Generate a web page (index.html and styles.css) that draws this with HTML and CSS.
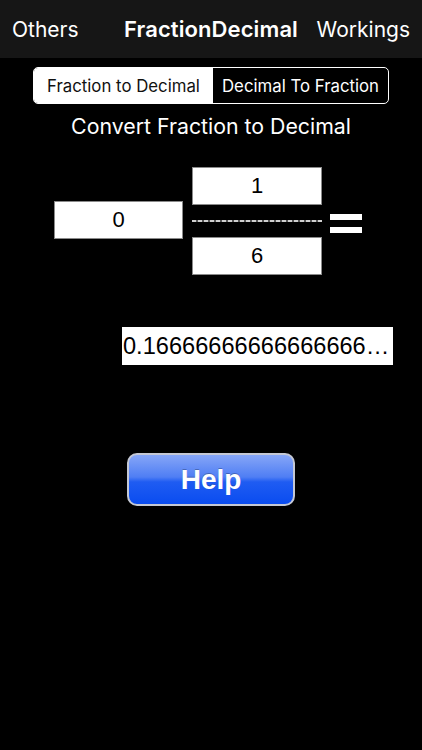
FILE: index.html
```html
<!DOCTYPE html>
<html>
<head>
<meta charset="utf-8">
<link rel="stylesheet" href="styles.css">
</head>
<body>
<div class="nav">
  <span class="nav-left">Others</span>
  <span class="nav-title">FractionDecimal</span>
  <span class="nav-right">Workings</span>
</div>
<div class="segment">
  <div class="seg seg-on">Fraction to Decimal</div>
  <div class="seg">Decimal To Fraction</div>
</div>
<div class="heading">Convert Fraction to Decimal</div>
<div class="fraction-row">
  <div class="box whole">0</div>
  <div class="frac">
    <div class="box">1</div>
    <div class="bar"></div>
    <div class="box">6</div>
  </div>
  <div class="equals"><div class="eq-line"></div><div class="eq-line"></div></div>
</div>
<div class="result-row">
  <div class="result">0.16666666666666666…</div>
</div>
<div class="help-row">
  <div class="help">Help</div>
</div>
</body>
</html>
```
FILE: styles.css
```css
html, body {
  margin: 0;
  padding: 0;
  background: #000;
  color: #fff;
  font-family: Inter, "Liberation Sans", sans-serif;
}
body {
  width: 422px;
  height: 750px;
  overflow: hidden;
}
.nav {
  height: 58px;
  background: #161616;
  display: grid;
  grid-template-columns: 1fr auto 1fr;
  align-items: center;
  padding: 0 12px;
  font-size: 21px;
}
.nav-left { justify-self: start; }
.nav-title { font-weight: 600; font-size: 22px; letter-spacing: 0.1px; }
.nav-right { justify-self: end; }
.segment {
  display: flex;
  width: 356px;
  height: 37px;
  margin: 9px 0 0 33px;
  border: 1px solid #fff;
  border-radius: 5px;
  box-sizing: border-box;
  overflow: hidden;
  font-size: 16.8px;
}
.seg {
  display: flex;
  align-items: center;
  justify-content: center;
  color: #fff;
  flex: 1;
}
.seg-on {
  background: #fff;
  color: #111;
  flex: 0 0 179px;
}
.heading {
  text-align: center;
  font-size: 21.3px;
  height: 32px;
  line-height: 32px;
  margin-top: 6px;
}
.fraction-row {
  display: flex;
  align-items: center;
  margin-top: 25px;
  padding-left: 54px;
}
.box {
  background: #fff;
  color: #000;
  font-family: "Liberation Sans", Arial, sans-serif;
  font-size: 22px;
  height: 38px;
  display: flex;
  align-items: center;
  justify-content: center;
  border: 1px solid #8a8a8a;
  box-sizing: border-box;
}
.whole {
  width: 129px;
  margin-top: -2px;
}
.frac {
  display: flex;
  flex-direction: column;
  width: 130px;
  margin-left: 9px;
}
.bar {
  height: 2px;
  margin: 15px 0 15px;
  background: repeating-linear-gradient(90deg, #d0d0d0 0 4px, #555 4px 6px);
}
.equals {
  display: flex;
  flex-direction: column;
  gap: 7px;
  margin-left: 8px;
  margin-top: 4px;
}
.eq-line {
  width: 32px;
  height: 6px;
  background: #fff;
}
.result-row {
  padding-left: 122px;
  margin-top: 52px;
}
.result {
  width: 271px;
  height: 38px;
  box-sizing: border-box;
  background: #fff;
  color: #000;
  font-family: "Liberation Sans", Arial, sans-serif;
  font-size: 23.6px;
  display: flex;
  align-items: center;
  padding-left: 1px;
  white-space: nowrap;
  overflow: hidden;
}
.help-row {
  padding-left: 127px;
  margin-top: 88px;
}
.help {
  width: 168px;
  height: 53px;
  box-sizing: border-box;
  border: 2px solid #c4c8d4;
  border-radius: 10px;
  background: linear-gradient(180deg, #86a6f7 0%, #4f7ef4 45%, #1f5cf2 55%, #0a4cf0 100%);
  color: #fff;
  font-family: "Liberation Sans", Arial, sans-serif;
  font-weight: bold;
  font-size: 28px;
  display: flex;
  align-items: center;
  justify-content: center;
  text-shadow: 0 -1px 0 rgba(0,0,0,0.25);
}
```
